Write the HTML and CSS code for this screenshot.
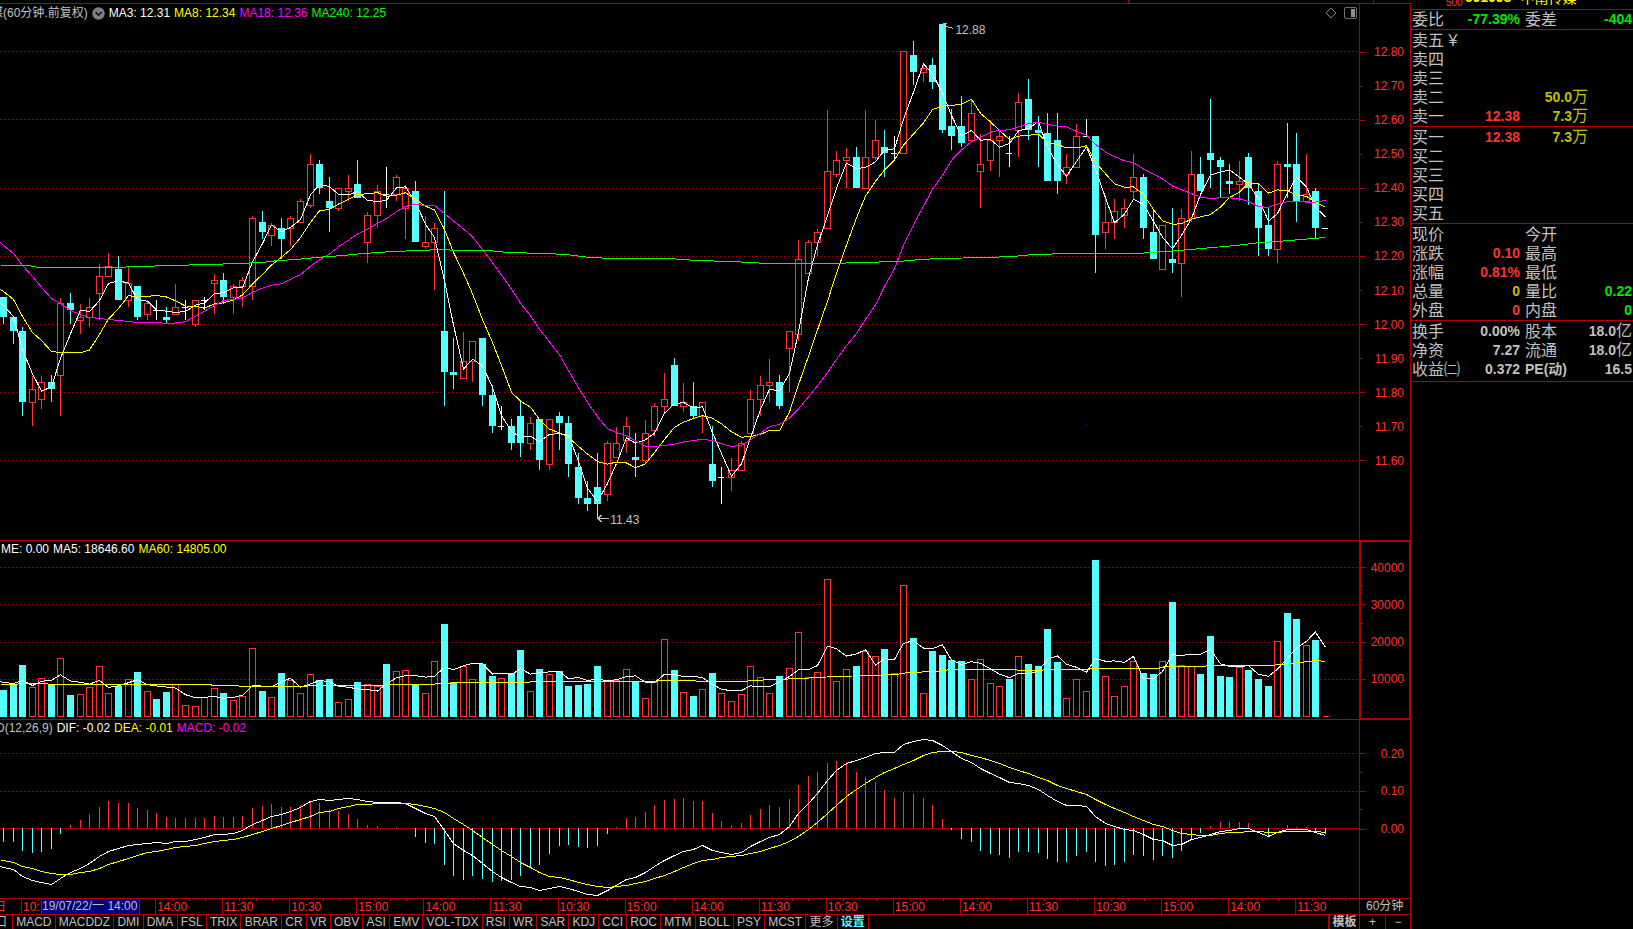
FILE: index.html
```html
<!DOCTYPE html>
<html lang="zh-CN">
<head>
<meta charset="utf-8">
<title>中南传媒 60分钟</title>
<link rel="stylesheet" href="styles.css">
</head>
<body>
<div class="terminal">
  <main class="charts">
    <div class="topstrip"></div>

    <section class="panel panel-price">
      <div class="plot">
        <svg class="canvas" id="price" viewBox="0 4 1359 536" preserveAspectRatio="none"></svg>
        <div class="legend legend-price">
          <span class="gray">媒(60分钟.前复权)</span>
          <svg class="toggle" viewBox="0 0 13 13"><circle cx="6.5" cy="6.5" r="6.2" fill="#808080"/><path d="M3.5 5l3 3 3-3" fill="none" stroke="#111" stroke-width="1.6"/></svg>
          <span class="white">MA3: 12.31</span>
          <span class="yellow">MA8: 12.34</span>
          <span class="magenta">MA18: 12.36</span>
          <span class="lime">MA240: 12.25</span>
        </div>
        <div class="tools">
          <svg width="12" height="12" viewBox="0 0 12 12"><path d="M6 1l5 5-5 5-5-5z" fill="none" stroke="#808080"/></svg>
          <svg width="13" height="12" viewBox="0 0 13 12"><rect x=".5" y=".5" width="12" height="11" rx="1.5" fill="none" stroke="#707070"/><path d="M7 2h4v8H7z" fill="#909090"/></svg>
        </div>
        <span class="mark mark-high">12.88</span>
        <span class="mark mark-low">11.43</span>
      </div>
      <ul class="axis axis-price">
        <li class="major">12.80</li><li>12.70</li><li class="major">12.60</li><li>12.50</li><li class="major">12.40</li><li>12.30</li><li class="major">12.20</li><li>12.10</li><li class="major">12.00</li><li>11.90</li><li class="major">11.80</li><li>11.70</li><li class="major">11.60</li>
      </ul>
    </section>

    <section class="panel">
      <div class="plot">
        <svg class="canvas" id="volume" viewBox="0 541 1359 178" preserveAspectRatio="none"></svg>
        <div class="legend legend-volume">
          <span class="white">ME: 0.00</span>
          <span class="white">MA5: 18646.60</span>
          <span class="yellow">MA60: 14805.00</span>
        </div>
      </div>
      <ul class="axis axis-half axis-volume">
        <li class="major">40000</li><li class="major">30000</li><li class="major">20000</li><li class="major">10000</li>
      </ul>
    </section>

    <section class="panel">
      <div class="plot">
        <svg class="canvas" id="macd" viewBox="0 720 1359 178" preserveAspectRatio="none"></svg>
        <div class="legend legend-macd">
          <span class="gray">D(12,26,9)</span>
          <span class="white">DIF: -0.02</span>
          <span class="yellow">DEA: -0.01</span>
          <span class="magenta">MACD: -0.02</span>
        </div>
      </div>
      <ul class="axis axis-half axis-macd">
        <li class="major">0.20</li><li class="major">0.10</li><li class="major">0.00</li>
      </ul>
    </section>

    <div class="timebar">
      <ol class="times">
        <li class="stub">日</li><li>10:</li><li></li><li>14:00</li><li>11:30</li><li>10:30</li><li>15:00</li><li>14:00</li><li>11:30</li><li>10:30</li><li>15:00</li><li>14:00</li><li>11:30</li><li>10:30</li><li>15:00</li><li>14:00</li><li>11:30</li><li>10:30</li><li>15:00</li><li>14:00</li><li>11:30</li>
      </ol>
      <span class="cursor-time">19/07/22/一 14:00</span>
      <div class="period">60分钟</div>
    </div>

    <nav class="tabbar">
      <div class="tabs">
        <button class="cut">口</button><button>MACD</button><button>MACDDZ</button><button>DMI</button><button>DMA</button><button>FSL</button><button>TRIX</button><button>BRAR</button><button>CR</button><button>VR</button><button>OBV</button><button>ASI</button><button>EMV</button><button>VOL-TDX</button><button>RSI</button><button>WR</button><button>SAR</button><button>KDJ</button><button>CCI</button><button>ROC</button><button>MTM</button><button>BOLL</button><button>PSY</button><button>MCST</button><button>更多</button><button class="active">设置</button>
      </div>
      <button class="template">模板</button>
      <div class="zoomers"><button>+</button><button>−</button></div>
    </nav>
  </main>

  <aside class="quote">
    <header class="stock"><small>500</small><b>601098</b><span>中南传媒</span></header>
    <table class="block">
      <tr><th>委比</th><td class="green">-77.39%</td><th>委差</th><td class="green">-404</td></tr>
    </table>
    <table class="block book">
      <tr><th>卖五 ¥</th><td></td><td></td></tr>
      <tr><th>卖四</th><td></td><td></td></tr>
      <tr><th>卖三</th><td></td><td></td></tr>
      <tr><th>卖二</th><td></td><td class="gold">50.0<i>万</i></td></tr>
      <tr><th>卖一</th><td class="red">12.38</td><td class="gold">7.3<i>万</i></td></tr>
    </table>
    <table class="block book">
      <tr><th>买一</th><td class="red">12.38</td><td class="gold">7.3<i>万</i></td></tr>
      <tr><th>买二</th><td></td><td></td></tr>
      <tr><th>买三</th><td></td><td></td></tr>
      <tr><th>买四</th><td></td><td></td></tr>
      <tr><th>买五</th><td></td><td></td></tr>
    </table>
    <table class="block">
      <tr><th>现价</th><td></td><th>今开</th><td></td></tr>
      <tr><th>涨跌</th><td class="red">0.10</td><th>最高</th><td></td></tr>
      <tr><th>涨幅</th><td class="red">0.81%</td><th>最低</th><td></td></tr>
      <tr><th>总量</th><td class="gold">0</td><th>量比</th><td class="green">0.22</td></tr>
      <tr><th>外盘</th><td class="red">0</td><th>内盘</th><td class="green">0</td></tr>
    </table>
    <table class="block block-last">
      <tr><th>换手</th><td>0.00%</td><th>股本</th><td>18.0<i>亿</i></td></tr>
      <tr><th>净资</th><td>7.27</td><th>流通</th><td>18.0<i>亿</i></td></tr>
      <tr><th>收益㈡</th><td>0.372</td><th class="latin">PE(动)</th><td>16.5</td></tr>
    </table>
  </aside>
</div>
<script src="chart.js"></script>
</body>
</html>
```
FILE: styles.css
```css
* { box-sizing: border-box; }

html, body { height: 100%; }

body {
  margin: 0;
  background: #000;
  color: #c0c0c0;
  font-family: "Liberation Sans", "Noto Sans CJK SC", sans-serif;
  font-size: 12px;
  overflow: hidden;
}

ul, ol { margin: 0; padding: 0; list-style: none; }

button {
  margin: 0;
  padding: 0;
  border: 0;
  background: none;
  color: inherit;
  font: inherit;
  white-space: nowrap;
}

.white { color: #fff; }
.gray { color: #c0c0c0; }
.yellow { color: #ff0; }
.magenta { color: #f0f; }
.lime { color: #0f0; }
.red { color: #ff3232; }
.green { color: #00e600; }
.gold { color: #c0c000; }

.terminal {
  display: grid;
  grid-template-columns: minmax(0, 1fr) 222px;
  min-height: 100vh;
}

.charts {
  display: grid;
  grid-template-rows: 4px minmax(0, 3fr) minmax(0, 1fr) minmax(0, 1fr) 16px 14px;
  height: 100vh;
}

.topstrip {
  border-bottom: 1px solid #b00000;
  background:
    linear-gradient(#b00000, #b00000) 80% 0 / 1px 3px no-repeat,
    linear-gradient(#b00000, #b00000) 97.4% 0 / 1px 3px no-repeat;
}

/* chart panels */
.panel {
  display: grid;
  grid-template-columns: minmax(0, 1fr) 52px;
  border-bottom: 1px solid #b00000;
}

.plot { position: relative; overflow: hidden; }

.canvas { display: block; width: 100%; height: 100%; shape-rendering: crispEdges; }

.legend {
  position: absolute;
  top: 0;
  display: flex;
  align-items: center;
  gap: 4px;
  line-height: 16px;
  white-space: nowrap;
}
.legend-price { top: 1px; left: -9px; }
.legend-volume { left: 1px; }
.legend-macd { left: -4px; }
.toggle { width: 13px; height: 13px; }

.tools {
  position: absolute;
  top: 3px;
  right: 2px;
  display: flex;
  gap: 7px;
}

.mark { position: absolute; line-height: 14px; }
.mark-high { left: 70.3%; top: 3.5%; }
.mark-low { left: 44.9%; top: 95%; }

.axis {
  display: grid;
  grid-auto-rows: minmax(0, 1fr);
  border-left: 1px solid #b00000;
  border-right: 1px solid #b00000;
  color: #ff3232;
  text-align: right;
}
.axis-price { padding: 31px 0 62px; }
.axis-volume {
  padding: 7px 0 20px;
  border: 1px solid #b00000;
  border-left-width: 2px;
  border-right-width: 2px;
}
.axis-macd { padding: 15px 0 50px; }
.axis li {
  display: flex;
  align-items: center;
  justify-content: flex-end;
  padding-right: 6px;
  background: linear-gradient(#b00000, #b00000) 0 50% / 2px 1px no-repeat;
}
.axis .major { background-size: 5px 1px; }
.axis-half .major {
  background:
    linear-gradient(#b00000, #b00000) 0 50% / 5px 1px no-repeat,
    linear-gradient(#b00000, #b00000) 0 100% / 2px 1px no-repeat;
}
.axis-half .major:last-child { background-size: 5px 1px, 0 0; }
.axis-volume li { padding-right: 5px; }

/* time scale */
.timebar {
  position: relative;
  display: grid;
  grid-template-columns: minmax(0, 1fr) 52px;
  border-bottom: 1px solid #b00000;
  line-height: 15px;
}
.times {
  display: grid;
  grid-template-columns: 21px repeat(20, calc((100% - 21px) / 19.95));
  overflow: hidden;
  color: #ff3232;
}
.times li {
  border-left: 1px solid #b00000;
  padding-left: 1px;
  line-height: 16px;
  background:
    linear-gradient(#b00000, #b00000) 25% 0 / 1px 2px no-repeat,
    linear-gradient(#b00000, #b00000) 50% 0 / 1px 2px no-repeat,
    linear-gradient(#b00000, #b00000) 75% 0 / 1px 2px no-repeat;
}
.times .stub {
  display: flex;
  justify-content: flex-end;
  border-left: 0;
  padding-right: 15px;
  background: none;
}
.cursor-time {
  position: absolute;
  top: 0;
  left: 41px;
  width: 99px;
  border: solid #b00000;
  border-width: 0 1px;
  background: #000080;
  white-space: nowrap;
}
.period {
  border: solid #b00000;
  border-width: 0 1px;
  padding-left: 6px;
}

/* indicator tabs */
.tabbar {
  display: grid;
  grid-template-columns: minmax(0, 1fr) 31px 52px;
  line-height: 14px;
}
.tabs { display: flex; width: 869px; }
.tabs button { flex: 1 0 auto; padding: 0 3px; border-right: 1px solid #b00000; }
.tabs .cut {
  display: flex;
  flex: 0 0 13px;
  justify-content: flex-end;
  padding: 0 5px 0 0;
  overflow: hidden;
}
.tabs .active { color: #54ffff; font-weight: bold; }
.template { border-left: 2px solid #b00000; font-weight: bold; }
.zoomers {
  display: grid;
  grid-template-columns: 1fr 1fr;
  border: solid #b00000;
  border-width: 0 1px;
}
.zoomers button + button { border-left: 1px solid #b00000; }

/* quote panel */
.stock {
  display: flex;
  align-items: flex-end;
  gap: 2px;
  height: 10px;
  overflow: hidden;
  border-bottom: 1px solid #b00000;
  padding-left: 35px;
  color: #ff0;
  font-size: 14px;
  white-space: nowrap;
}
.stock small { color: #ff3232; font-size: 10px; line-height: 13px; }
.stock b { line-height: 23px; }
.stock span { padding-left: 7px; line-height: 21px; }

.block {
  width: 100%;
  table-layout: fixed;
  border-collapse: separate;
  border-spacing: 0;
  border-bottom: 1px solid #b00000;
  padding-top: 1px;
}
.stock + .block { padding-top: 0; }
.block-last { padding-bottom: 2px; }
.block tr { height: 19px; }
.block th, .block td { padding: 0; line-height: 19px; white-space: nowrap; }
.block th {
  width: 49px;
  padding-left: 1px;
  font-size: 16px;
  font-weight: 400;
  text-align: left;
}
.block td { font-size: 14px; font-weight: bold; text-align: right; }
.block td:nth-child(2) { width: 60px; }
.block td + th { width: 60px; padding-left: 5px; }
.block td:last-child { padding-right: 1px; }
.block i { font-size: 16px; font-style: normal; font-weight: 400; line-height: 16px; }
.block .latin { font-size: 14px; font-weight: bold; }
.book td:last-child { padding-right: 45px; }
```
FILE: chart.js
```js
const NS = "http://www.w3.org/2000/svg";
const xAt = i => 3 + Math.round(i * 1322 / 138);

/* kind, high, body top, body bottom, low; kind: u rising, d falling, w/x flat */
const candles = `d297,297,317,324 d317,317,331,344 d327,331,402,416 u376,389,403,426 u376,382,400,409
d375,382,389,402 u298,303,376,416 d293,303,310,324 u304,317,321,334 u298,307,318,327
u264,276,294,320 u253,266,277,277 d256,269,300,300 u266,283,301,307 d286,286,317,320
u300,303,315,320 x300,310,311,320 d307,317,320,324 u284,307,315,315 w300,307,308,320
u300,300,325,327 w297,300,301,310 u274,280,284,314 d273,280,297,304 u284,286,298,314
u277,280,287,307 u216,218,287,300 d211,222,232,239 u223,225,236,246 d218,228,239,259
u216,218,229,246 u199,201,223,223 u154,164,206,208 d160,164,188,194 d177,201,208,232
u188,188,209,211 u175,188,192,201 d160,184,198,198 u212,215,243,263 u185,191,216,228
x167,194,195,208 u175,177,195,201 u185,188,209,239 d181,191,242,242 u216,242,247,249
u223,228,243,290 d191,331,372,406 d338,372,375,389 u332,361,379,379 u341,341,362,382
d338,338,395,406 d385,395,426,433 w406,426,427,430 d419,426,443,450 d401,416,443,457
u417,423,444,450 d419,419,460,470 u419,419,465,470 d412,416,423,450 d416,423,464,477
d453,467,498,504 d481,498,504,511 d453,487,504,518 u441,443,495,501 u427,443,458,458
u417,426,441,453 d433,457,460,477 u420,433,461,464 u403,406,431,436 u373,399,407,412
d358,365,406,406 u383,402,407,412 d382,406,416,418 u402,402,417,433 d426,464,481,487
w467,477,478,504 u458,470,478,491 u441,443,471,471 u390,399,434,434 u376,385,400,416
u359,382,386,402 d375,382,406,409 u331,331,349,392 u240,259,335,341 u240,242,274,274
u229,232,243,256 u110,171,229,229 u151,160,175,177 u148,157,161,188 d147,157,188,188
u110,157,189,189 u120,140,158,160 d130,147,153,177 w136,153,154,160 u51,51,154,154
d41,55,72,85 u65,68,73,82 d58,65,82,89 d24,24,130,133 d109,126,136,150
d96,126,143,147 u99,113,141,141 u134,164,172,208 u120,140,161,171 u131,136,141,177
x136,153,154,167 u93,102,131,157 d79,99,130,140 d116,130,133,167 d113,133,181,181
d113,140,181,194 u154,167,175,184 u124,136,168,168 w119,136,137,137 d136,136,235,273
u195,222,233,249 u199,211,223,239 u199,208,216,228 u154,177,192,200 d174,177,228,239
d210,232,259,259 u225,225,270,270 d208,259,263,273 u209,218,264,297 u151,174,219,222
d157,174,191,191 d99,153,160,188 d157,160,167,198 d164,181,184,194 u161,181,185,201
d153,157,188,205 d185,191,228,256 d208,225,249,256 u161,164,250,263 d123,164,167,198
d133,164,201,222 u154,194,202,202 d188,191,228,239 w228,228,229,229`
  .split(/\s+/).map(s => [s[0], ...s.slice(1).split(",").map(Number)]);

const volume = [690,684,665,687,678,684,658,695,694,687,666,693,686,679,672,691,699,692,684,705,
706,697,688,693,700,696,648,691,697,673,680,693,674,680,679,702,699,682,684,686,
664,671,670,685,693,661,624,683,666,679,664,676,678,673,650,691,669,674,671,686,
685,684,666,681,680,669,681,698,682,639,670,692,696,689,673,693,701,694,666,677,
693,676,668,632,677,672,579,681,669,666,651,656,649,673,585,638,693,651,655,660,
661,679,659,683,686,679,656,664,666,629,662,698,679,691,560,676,696,686,661,673,
674,661,602,665,666,674,636,676,677,667,670,679,686,641,613,619,645,640,716];

const hist = [842,842,851,853,852,849,834,825,820,814,807,801,803,803,808,810,813,817,818,818,
818,818,816,817,817,816,808,806,804,807,807,805,802,803,809,811,814,819,825,826,
828,827,828,837,843,844,865,876,880,876,879,882,881,880,876,868,865,854,846,845,
847,848,846,834,827,818,817,812,805,800,799,798,801,801,813,821,825,823,815,809,
805,807,799,785,776,772,763,761,762,772,777,782,790,798,792,794,798,805,819,830,
839,842,851,854,855,858,852,852,853,859,862,862,856,852,862,866,865,862,855,856,
860,856,858,851,839,833,826,822,822,822,823,828,836,828,825,827,827,832,834];

const dif = [867,869,876,880,882,884,878,872,868,863,856,851,848,845,844,843,842,843,841,841,
839,837,834,834,833,830,824,820,816,814,811,807,801,799,800,799,798,799,801,802,
802,802,803,808,813,816,830,843,850,855,863,871,877,882,886,887,890,888,886,888,
891,894,895,890,885,879,877,872,866,860,855,851,849,845,850,852,854,852,846,841,
837,834,826,813,803,793,780,770,763,760,757,753,752,752,744,741,739,740,745,751,
758,762,768,773,777,782,783,785,789,795,801,805,805,806,816,823,826,829,830,834,
839,840,845,844,839,837,834,831,830,828,828,832,836,832,829,829,829,832,835];

const dea = [860,862,866,868,871,873,874,874,872,871,868,864,861,858,855,852,851,849,847,846,
845,843,841,840,839,837,834,831,828,825,822,819,816,812,811,808,806,804,804,803,
803,803,803,804,806,808,812,818,824,830,837,844,850,856,862,867,872,876,877,879,
882,884,886,887,886,885,883,881,878,875,871,867,863,860,859,857,856,855,853,851,
848,845,841,836,829,822,813,805,796,789,783,777,772,768,764,760,755,752,751,751,
752,755,757,760,763,767,770,773,777,780,785,788,791,794,799,804,808,812,816,820,
824,826,830,833,834,835,835,833,832,832,831,831,832,832,831,831,831,831,832];

const ma240 = [0,265,28,265,38,267,112,267,140,266,170,265,208,264,238,263,262,262,278,260,296,259,
315,257,343,255,363,253,392,251,420,250,440,249,458,250,487,250,507,252,545,253,565,254,590,257,
612,258,668,258,697,260,730,261,750,262,766,263,831,263,860,262,898,261,920,259,940,258,985,257,
1013,256,1033,254,1071,253,1137,253,1165,251,1190,249,1235,245,1260,242,1277,241,1300,239,1325,237];

const ma60 = [0,684,15,684,20,683,45,683,50,684,210,684,212,685,237,685,240,686,305,686,310,685,380,685,
395,684,430,684,440,683,460,682,515,682,545,681,650,681,665,680,690,680,700,681,745,681,750,680,
775,679,800,678,835,676,870,675,895,674,908,672,935,671,950,669,1014,669,1019,670,1040,670,1045,669,
1085,669,1095,668,1157,668,1165,666,1203,666,1208,665,1270,665,1280,664,1300,662,1315,660,1325,661];

function draw(svg, d, stroke, fill, dash) {
  const p = document.createElementNS(NS, "path");
  p.setAttribute("d", d);
  p.setAttribute("stroke", stroke || "none");
  p.setAttribute("fill", fill || "none");
  if (dash) p.setAttribute("stroke-dasharray", dash);
  svg.appendChild(p);
}

const box = (x, t, b) => `M${x - 2.5} ${t + .5}H${x + 3.5}V${b - .5}H${x - 2.5}Z`;
const slab = (x, t, b) => `M${x - 3} ${t}H${x + 4}V${b}H${x - 3}Z`;
const stem = (x, a, b) => b > a ? `M${x + .5} ${a}V${b}` : "";
const grid = (svg, rows) => rows.forEach(y => draw(svg, `M0 ${y + .5}H1359`, "#b00000", null, "1 3"));

function curve(svg, flat, color) {
  let d = "";
  for (let i = 0; i < flat.length; i += 2) d += `${i ? "L" : "M"}${flat[i] + .5} ${flat[i + 1] + .5}`;
  draw(svg, d, color);
}
const series = (first, ys) => [0, first, ...ys.flatMap((y, i) => [xAt(i), y])];

/* moving average; lead holds the values that depend on bars before the window */
const average = (src, n, lead) => src.map((v, i) => i < lead.length
  ? lead[i] : src.slice(i - n + 1, i + 1).reduce((a, b) => a + b) / n);

const RED = "#ff3232", CYAN = "#54ffff";

const price = document.getElementById("price");
grid(price, [51, 119, 188, 256, 324, 392, 460]);
candles.forEach(([k, h, t, b, l], i) => {
  const x = xAt(i);
  if (k === "u") {
    draw(price, box(x, t, b), RED, "#000");
    draw(price, stem(x, h, t) + stem(x, b, l) || "M0 0", RED);
  } else if (k === "d") {
    draw(price, slab(x, t, b), null, CYAN);
    draw(price, stem(x, h, l), CYAN);
  } else {
    draw(price, `M${x - 3} ${t + .5}H${x + 3}` + stem(x, h, l), "#fff");
  }
});
const close = candles.map(([k, h, t, b]) => k === "d" ? b - 1 : t);
curve(price, series(303, average(close, 3, [305, 316])), "#fff");
curve(price, series(289, average(close, 8, [291, 299, 316, 332, 340, 351, 352])), "#ff0");
curve(price, series(242, average(close, 18,
  [245, 253, 265, 276, 287, 298, 303, 310, 314, 317, 318, 319, 320, 321, 322, 322, 322])), "#f0f");
curve(price, ma240, "#0f0");
draw(price, "M953.5 28.5L943 25.5M947 23.5H943.5V28M609 518.5H598M601.5 515L598 518.5L601.5 522", "#c0c0c0");
draw(price, "M1086 424h2v1h-2z", null, "#0000a0");

const vol = document.getElementById("volume");
grid(vol, [567, 604, 642, 679]);
volume.forEach((t, i) => {
  const x = xAt(i), k = candles[i][0];
  if (k === "d" || k === "x") draw(vol, slab(x, t, 717), null, CYAN);
  else draw(vol, box(x, t, 717), RED, "#000");
});
curve(vol, series(681, average(volume, 5, [682, 683, 680, 685])), "#fff");
curve(vol, ma60, "#ff0");

const macd = document.getElementById("macd");
grid(macd, [753, 791]);
draw(macd, "M0 828.5H1359", "#b00000", null, "1 1");
hist.forEach((y, i) => {
  if (y < 828) draw(macd, stem(xAt(i), y, 828), RED);
  if (y > 828) draw(macd, stem(xAt(i), 828, y), CYAN);
});
curve(macd, series(866, dif), "#fff");
curve(macd, series(860, dea), "#ff0");
```
